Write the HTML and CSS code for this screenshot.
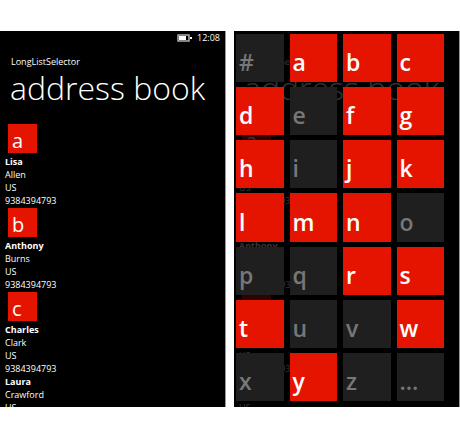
FILE: index.html
```
<!DOCTYPE html>
<html lang="en">
<head>
<meta charset="utf-8">
<title>Address book</title>
<link rel="stylesheet" href="styles.css">
</head>
<body>
<main class="screens">
  <section class="phone" aria-label="Contact list">
    <div class="status">
      <svg class="battery" width="16" height="8" viewBox="0 0 16 8" aria-hidden="true"><rect x="1" y="1" width="11" height="6" fill="#000" stroke="#bbb" stroke-width="1.4"/><rect x="2" y="2" width="7" height="4" fill="#fff"/><rect x="13" y="3" width="2" height="2" fill="#fff"/></svg>
      <span>12:08</span>
    </div>
    <div class="page">
      <p class="app">LongListSelector</p>
      <h1 class="title">address book</h1>
      <div class="list">
        <button class="letter">a</button>
        <ul class="person"><li class="name">Lisa</li><li>Allen</li><li>US</li><li>9384394793</li></ul>
        <button class="letter">b</button>
        <ul class="person"><li class="name">Anthony</li><li>Burns</li><li>US</li><li>9384394793</li></ul>
        <button class="letter">c</button>
        <ul class="person"><li class="name">Charles</li><li>Clark</li><li>US</li><li>9384394793</li></ul>
        <ul class="person"><li class="name">Laura</li><li>Crawford</li><li>US</li></ul>
      </div>
    </div>
  </section>
  <section class="phone" aria-label="Jump list">
    <div class="status"></div>
    <div class="page dimmed" aria-hidden="true">
      <p class="app">LongListSelector</p>
      <p class="title">address book</p>
      <div class="list">
        <div class="letter">a</div>
        <ul class="person"><li class="name">Lisa</li><li>Allen</li><li>US</li><li>9384394793</li></ul>
        <div class="letter">b</div>
        <ul class="person"><li class="name">Anthony</li><li>Burns</li><li>US</li><li>9384394793</li></ul>
        <div class="letter">c</div>
        <ul class="person"><li class="name">Charles</li><li>Clark</li><li>US</li><li>9384394793</li></ul>
        <ul class="person"><li class="name">Laura</li><li>Crawford</li><li>US</li></ul>
      </div>
    </div>
    <div class="jump">
      <button class="tile" disabled>#</button><button class="tile">a</button><button class="tile">b</button><button class="tile">c</button>
      <button class="tile">d</button><button class="tile" disabled>e</button><button class="tile">f</button><button class="tile">g</button>
      <button class="tile">h</button><button class="tile" disabled>i</button><button class="tile">j</button><button class="tile">k</button>
      <button class="tile">l</button><button class="tile">m</button><button class="tile">n</button><button class="tile" disabled>o</button>
      <button class="tile" disabled>p</button><button class="tile" disabled>q</button><button class="tile">r</button><button class="tile">s</button>
      <button class="tile">t</button><button class="tile" disabled>u</button><button class="tile" disabled>v</button><button class="tile">w</button>
      <button class="tile" disabled>x</button><button class="tile">y</button><button class="tile" disabled>z</button><button class="tile" disabled>...</button>
    </div>
  </section>
</main>
</body>
</html>
```
FILE: styles.css
```
* {
  box-sizing: border-box;
  margin: 0;
  padding: 0;
}

body {
  background: #fff;
  color: #fff;
  font-family: "Open Sans", "Noto Sans", sans-serif;
}

.screens {
  display: grid;
  grid-template-columns: 1fr 1fr;
  gap: 8px;
  height: 100vh;
  padding: 31px 0 30px;
}

.phone {
  position: relative;
  display: flex;
  flex-direction: column;
  min-height: 0;
  overflow: hidden;
  background: #000;
  border-right: 1px solid #999;
}

.status {
  display: flex;
  flex: none;
  align-items: center;
  justify-content: flex-end;
  gap: 4px;
  height: 14px;
  padding-right: 5px;
  font-size: 9px;
  line-height: 14px;
}

.page {
  flex: none;
  padding: 11px 5px 0;
}

.dimmed {
  opacity: 0.2;
}

.app {
  padding-left: 6px;
  font-size: 9px;
  line-height: 12px;
}

.title {
  padding-left: 5px;
  font-size: 32px;
  font-weight: 300;
  line-height: 40px;
  white-space: nowrap;
}

.list {
  padding-top: 16px;
}

.letter {
  display: flex;
  align-items: flex-end;
  width: 29px;
  height: 29px;
  margin: 0 0 2px 3px;
  padding: 0 0 0 4px;
  border: 0;
  background: #e51400;
  color: #fff;
  font-family: inherit;
  font-size: 20px;
  line-height: 24px;
}

.person {
  list-style: none;
  font-size: 9px;
  line-height: 13px;
}

.person + .letter {
  margin-top: 1px;
}

.name {
  font-weight: 700;
}

.jump {
  position: absolute;
  inset: 3px 15px 6px 2px;
  display: grid;
  grid-template-columns: repeat(4, 1fr);
  grid-template-rows: repeat(7, 1fr);
  gap: 5px 6px;
}

.tile {
  display: flex;
  align-items: flex-end;
  min-width: 0;
  padding: 0 0 5px 3px;
  border: 0;
  background: #e51400;
  color: #fff;
  font-family: inherit;
  font-size: 23px;
  font-weight: 600;
  line-height: 30px;
}

.tile:disabled {
  background: #1f1f1f;
  color: #777;
}
```
